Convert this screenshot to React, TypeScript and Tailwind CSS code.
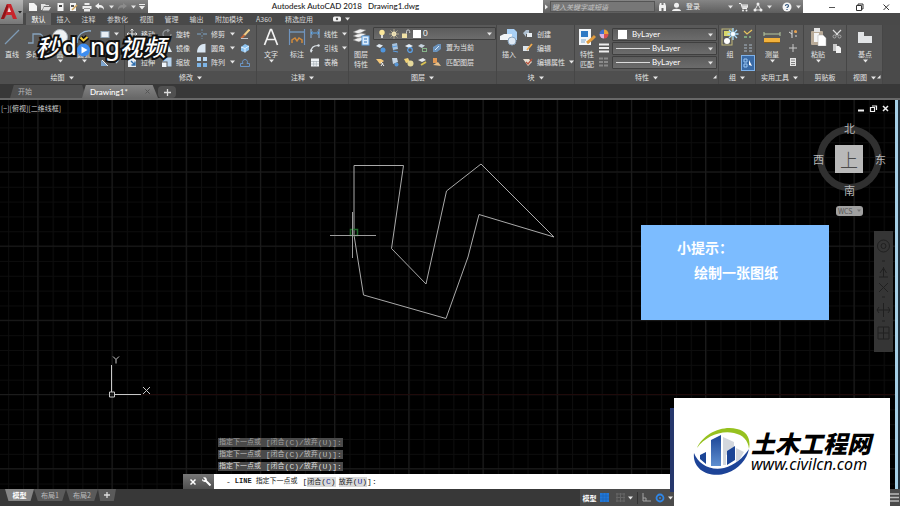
import React from "react";

type Kids = { children?: React.ReactNode };

function Svg({ w, h, children }: Kids & { w: number; h: number }) {
  return (
    <svg width={w} height={h} viewBox={`0 0 ${w} ${h}`} fill="none" aria-hidden="true" className="block shrink-0">
      {children}
    </svg>
  );
}

function Caret() {
  return (
    <Svg w={5} h={4}>
      <path d="M0 .5h5L2.5 3.5z" fill="#e6e6e6" />
    </Svg>
  );
}

/* ---------- small 10px icons ---------- */
const icons: Record<string, React.ReactNode> = {
  rect: <rect x="1" y="2.500" width="8" height="6" fill="#e8eef4" stroke="#8fa3b5" />,
  ellipse: <ellipse cx="5" cy="5" rx="4" ry="2.500" stroke="#dfe6ec" />,
  hatch: <><path d="M1 9V3l7 6z" fill="#7ea6cf" /><path d="M2 3l6 6" stroke="#eee" /></>,
  move: <path d="M5 0v10M0 5h10M3.500 1.500L5 0l1.500 1.500M3.500 8.500L5 10l1.500-1.500M1.500 3.500L0 5l1.500 1.500M8.500 3.500L10 5 8.500 6.500" stroke="#e3e3e3" />,
  rotate: <path d="M6 1.200A4 4 0 1 0 9 5M5 0l2 1.300L5.300 3" stroke="#8f9397" strokeWidth="1.300" />,
  trim: <><path d="M0 5h4M6 5h4" stroke="#7fa6c9" /><path d="M5 0v4M5 6v4" stroke="#6d8ba6" strokeDasharray="2 1" /></>,
  copy: <><circle cx="3.500" cy="4" r="2.800" stroke="#cfd8e0" /><circle cx="7" cy="6.500" r="2.500" fill="#5f9ed6" /></>,
  mirror: <><path d="M4 1v8H0z" fill="#a9c6e2" /><path d="M6 1v8h4z" fill="#e6edf3" /></>,
  fillet: <path d="M0 9.500C0 4 3.500.8 8.500.8v8.700z" fill="#d9e6f2" />,
  stretch: <><path d="M1 0h5l3 3v7H1z" fill="#e8eef4" /><path d="M4 4l4 4M8 4.500V8H4.500" stroke="#2f6fae" strokeWidth="1.400" /></>,
  scale: <><path d="M.5.500h9v9h-4V4.500h-5z" fill="#b7d3ee" /><rect x="0" y="5.500" width="4.500" height="4.500" fill="#eef4fa" /></>,
  array: <><rect width="4" height="4" fill="#b9d7f2" /><rect x="6" width="4" height="4" fill="#b9d7f2" /><rect y="6" width="4" height="4" fill="#7db4e6" /><rect x="6" y="6" width="4" height="4" fill="#7db4e6" /></>,
  erase: <><path d="M9.500.5L4 6.500" stroke="#f0cf88" strokeWidth="2" /><path d="M4.500 6L1 9.500" stroke="#c56a3c" strokeWidth="2" /><path d="M1 9.500h7" stroke="#bfc7cd" /></>,
  explode: <><path d="M1 4l4-3 4 2v4L5 9.500 1 8z" fill="#8cc2ee" /><path d="M1 4l4 1.500L9 3M5 5.500v4" stroke="#e4f2ff" /></>,
  offset: <path d="M.5 9.500h9V6.500H7a2.500 2.500 0 1 0-4 0H.5z" stroke="#6c96c4" />,
  linear: <><path d="M1 0v9M9 0v9" stroke="#8fb6e0" /><path d="M1 4h8M2.500 2.500L1 4l1.500 1.500M7.500 2.500L9 4 7.500 5.500" stroke="#5ea7ea" /></>,
  leader: <><path d="M1 9C1 5 3 2.500 8 2.500" stroke="#dde3e8" strokeWidth="1.200" /><path d="M0 6.500l1 3.500 2-3z" fill="#dde3e8" /><circle cx="8.500" cy="2.500" r="1.200" fill="#dde3e8" /></>,
  table: <><rect x="1" y="1.500" width="8" height="8" fill="#eef2f5" /><path d="M1 4.500h8M1 7h8M3.700 4v6M6.300 4v6" stroke="#9ba4ab" strokeWidth=".6" /></>,
  lay1: <><path d="M0 3l3-2 4 1.500L4 5z" fill="#dfe9f2" /><circle cx="7" cy="7" r="2.500" fill="#4f95dd" /></>,
  lay2: <><path d="M2 1l5-1 1 6-5 1z" fill="#a7c3de" /><path d="M3 8l5 1M2 4l5-1" stroke="#5c9de0" strokeWidth="1.200" /></>,
  lay3: <><path d="M1 3l4-2 4 2-4 2z" fill="#e3edf6" /><circle cx="6" cy="7" r="2.300" stroke="#5aa3ee" strokeWidth="1.200" /></>,
  lay4: <><path d="M0 3l3-2 4 1.500L4 5z" fill="#c7d4df" /><rect x="4.500" y="5.500" width="4" height="3" stroke="#86b489" /></>,
  lay5: <><path d="M1 4l5-3h3v5L5 9H1z" fill="#6b93bd" /><path d="M3 7l4-4" stroke="#d9e9f8" /></>,
  lay6: <><path d="M0 2h5l3 2-4 3z" fill="#f4c879" /><path d="M5 5l3 4M5 9l2-3" stroke="#f3f3f3" /></>,
  lay7: <><path d="M2 1h5l1 4-5 2z" fill="#c4d5e5" /><circle cx="6.500" cy="7.500" r="2" fill="#5796d6" /></>,
  lay8: <><path d="M0 2l4-1 2 4-4 1z" fill="#f1d277" /><circle cx="6.500" cy="6.500" r="3" fill="#e6d99b" /></>,
  lay9: <><path d="M0 3l5-2 3 2-4 2z" fill="#e6e9ec" /><path d="M3 8l5-3" stroke="#d9c252" strokeWidth="2" /></>,
  lay10: <><path d="M1 1h4v5H1z" fill="#e39a55" /><path d="M1 8l8 1-3-4z" fill="#e8c08a" /></>,
  create: <><path d="M0 4l3-3h3v4H3v3z" fill="#aebfd0" /><rect x="4" y="4" width="5" height="4" fill="#e7edf2" /></>,
  edit: <><rect x="0" y="3" width="6" height="5" fill="#dbe4ec" /><path d="M4 7l5-6" stroke="#f0a94c" strokeWidth="1.800" /></>,
  attr: <><path d="M0 2h6l3 3-4 4z" fill="#e6ddd0" /><path d="M3 5l2 2 4-5" stroke="#b5523c" strokeWidth="1.300" /></>,
  wheel: <><path d="M5 5V.5A4.500 4.500 0 0 1 9.500 5z" fill="#e8a23a" /><path d="M5 5h4.500A4.500 4.500 0 0 1 5 9.500z" fill="#d94f4f" /><path d="M5 5v4.500A4.500 4.500 0 0 1 .5 5z" fill="#d9b3e0" /><path d="M5 5H.5A4.500 4.500 0 0 1 5 .5z" fill="#3f6fd0" /></>,
  weight: <path d="M0 1.500h10M0 5h10M0 8.500h10" stroke="#eee" strokeWidth="2" />,
  ltype: <path d="M0 1.500h10M0 5h10M0 8.500h10" stroke="#8a8a8a" strokeWidth="2" strokeDasharray="4 1" />,
  g1: <><path d="M1 2l3 3 5-4" stroke="#e6c25e" strokeWidth="1.300" /><path d="M1 8h3M6 8h2" stroke="#8cc08a" strokeWidth="1.500" /></>,
  g2: <path d="M1 2h3M6 2h3M1 5h3M6 5h3M1 8h3M6 8h3" stroke="#a9b8c6" />,
  g3: <><path d="M1 1h3v3H1zM1 6h3v3H1z" stroke="#9cc8f5" /><path d="M6 2l3 6-3-1z" fill="#fff" /></>,
  u1: <><path d="M1 3l3 2M4 1v8M7 3h2M7 7h2" stroke="#dcdcdc" /><circle cx="7.500" cy="2.500" r="1.500" fill="#e7a04e" /></>,
  u2: <path d="M5 1v8M1 5h8" stroke="#c9c9c9" />,
  u3: <><rect x="2" y="1" width="6" height="8" fill="#e6e6e6" /><path d="M3 3h4M3 5.500h4M3 7.500h4" stroke="#666" strokeWidth=".8" /></>,
  cut: <><path d="M1 1l5 5M9 1L4 6" stroke="#ddd" strokeWidth="1.200" /><circle cx="2.500" cy="7.500" r="1.500" stroke="#aaa" /><circle cx="7.500" cy="7.500" r="1.500" stroke="#aaa" /></>,
  pages: <><path d="M1 1h4v7H1z" fill="#c9c9c9" /><path d="M4 3h3l2 2v5H4z" fill="#f2f2f2" /></>,
  bulb: <><circle cx="5" cy="3.500" r="2.700" fill="#fbe79a" /><path d="M4 6h2v3H4z" fill="#dcdcdc" /></>,
  sun: <><circle cx="5" cy="5" r="2.400" fill="#fdf0c0" /><path d="M5 0v10M0 5h10M1.500 1.500l7 7M8.500 1.500l-7 7" stroke="#d9cfa6" strokeWidth=".6" /></>,
  lock: <><rect x="1" y="4.500" width="5" height="4.500" fill="#f1e2a6" /><path d="M5.500 4.500V2.500a1.600 1.600 0 0 1 3.200 0V4" stroke="#ccc" /></>,
};

function Ic({ n }: { n: string }) {
  return <Svg w={10} h={10}>{icons[n]}</Svg>;
}

/* ---------- large 18px icons ---------- */
const bigIcons: Record<string, React.ReactNode> = {
  line: <path d="M2 16L16 2" stroke="#7e9bb5" strokeWidth="1.300" />,
  pline: <path d="M1 15h5V6h6a4 4 0 0 1 4 4" stroke="#86a3bd" strokeWidth="1.300" />,
  circle: <circle cx="9" cy="9" r="7.500" fill="#eef1f3" stroke="#aab4bd" />,
  arc: <path d="M2 15C2 7 8 2 16 3" stroke="#8fb2d3" strokeWidth="1.300" />,
  text: <path d="M2.500 17L8.500 1.500h1L15.500 17M5 11.500h8" stroke="#f2f2f2" strokeWidth="1.700" />,
  dim: <><path d="M1.500 1v16M16.500 1v16" stroke="#6f93bd" strokeWidth="1.200" /><path d="M2 4h14" stroke="#7fb2e6" /><path d="M4 15v-3l3-2 2 3 2-3 3 2v3" stroke="#d08a3c" strokeWidth="1.500" /></>,
  layers: <><path d="M1 4l7-3 6 1-7 4zM1 8l7-3 6 1-7 4zM1 12l7-3 6 1-7 4z" fill="#f1f1f1" stroke="#777" strokeWidth=".5" /><rect x="10" y="8" width="7" height="9" fill="#dcecfb" stroke="#5ea2e6" /><path d="M12 11h3M12 14h3" stroke="#2d6fb5" /></>,
  insert: <><path d="M7 1h7l3 3v8H7z" fill="#a9d0f5" /><path d="M0 8l4-2h8v6H0z" fill="#f0f3f6" /><circle cx="12" cy="13" r="4" fill="#dfe9f3" stroke="#8ba6c0" /></>,
  match: <><rect x="1" y="1" width="12" height="16" fill="#f4f7fa" /><rect x="3" y="3" width="7" height="6" fill="#2f7ac5" /><path d="M3 12h5M3 14h4" stroke="#7da4c8" /><path d="M9 15l5-4 3-3" stroke="#e09a3c" strokeWidth="3" /></>,
  group: <><rect x="1" y="1" width="10" height="16" stroke="#c2b97a" /><rect x="3" y="3" width="6" height="5" fill="#d9d86a" /><circle cx="6" cy="13" r="3" fill="#fff" /><path d="M12 0v12M6.500 6h11M8 2l8 8M16 2l-8 8" stroke="#a9dcfb" strokeWidth="1.300" /><circle cx="12" cy="6" r="2" fill="#fff" /></>,
  measure: <><path d="M1 6h16M1 4v4M17 4v4" stroke="#b8c9a0" /><rect x="1" y="10" width="16" height="4" fill="#f2b23c" /><path d="M1 14.500h16" stroke="#8d5f13" /></>,
  paste: <><rect x="2" y="3" width="12" height="14" rx="1" fill="#b9ab98" /><rect x="5" y="0" width="6" height="4" fill="#e4e4e4" /><path d="M5 5h5v9H5z" fill="#f4f4f4" /><path d="M9 7h5l3 3v8H9z" fill="#fff" stroke="#aaa" strokeWidth=".5" /></>,
  base: <path d="M2 4h6v4h8v7H2z" fill="#e2e4e6" />,
};

function Big({ n, label, label2, caret, wide }: { n: string; label: string; label2?: string; caret?: boolean; wide?: string }) {
  return (
    <button type="button" className={`flex flex-col items-center shrink-0 pt-[3px] ${wide ?? "w-6"}`}>
      <Svg w={18} h={18}>{bigIcons[n]}</Svg>
      <span className="mt-[3px] h-[10px] leading-[10px] whitespace-nowrap">{label}</span>
      {label2 && <span className="h-[10px] leading-[10px] whitespace-nowrap">{label2}</span>}
      {caret && <Caret />}
    </button>
  );
}

function Small({ n, label, caret }: { n: string; label?: string; caret?: boolean }) {
  return (
    <button type="button" aria-label={label ?? n} className="flex h-[14px] w-full items-center gap-1 whitespace-nowrap">
      <Ic n={n} />
      {label}
      {caret && <span className="ml-auto"><Caret /></span>}
    </button>
  );
}

function Col({ children, w }: Kids & { w: string }) {
  return <div className={`flex shrink-0 flex-col pt-[2px] ${w}`}>{children}</div>;
}

function Panel({ title, w, plain, launcher, children }: Kids & { title: string; w: string; plain?: boolean; launcher?: boolean }) {
  return (
    <section aria-label={title} className={`flex shrink-0 flex-col border-r border-[#464646] ${w}`}>
      <div className="flex h-[46px] bg-[#595959]">{children}</div>
      <div className="relative bg-[#4f4f4f]">
        <h2 className="flex h-[13px] items-center justify-center gap-1 whitespace-nowrap">
          {title}
          {!plain && <Caret />}
        </h2>
        {launcher && (
          <button type="button" aria-label={`${title}设置`} className="absolute top-1 right-px">
            <Svg w={4} h={4}><path d="M3.500 0v3.500H0z" fill="#e6e6e6" /></Svg>
          </button>
        )}
      </div>
    </section>
  );
}

function Combo({ label, value, children }: Kids & { label: string; value: string }) {
  return (
    <div className="flex h-[13px] items-center gap-[2px] rounded-[1px] border border-[#3f3f3f] bg-linear-to-b from-[#5c5c5c] to-[#6c6c6c] px-[3px]">
      {children}
      <select aria-label={label} className="h-[11px] min-w-0 flex-1 appearance-none bg-transparent font-['Lato',sans-serif] text-[8px] leading-[11px] text-white outline-none">
        <option>{value}</option>
      </select>
      <Caret />
    </div>
  );
}

function QuickAccess() {
  return (
    <div className="flex h-full w-[125px] shrink-0 items-center justify-between bg-linear-to-b from-[#858585] to-[#5e5e5e] pr-[3px] pl-[5px]">
      <button type="button" aria-label="新建"><Svg w={10} h={10}><path d="M1 1h5l3 3v5H1z" fill="#f3f3f3" /></Svg></button>
      <button type="button" aria-label="打开"><Svg w={10} h={10}><path d="M0 2h4l1 1h3v1H3L1 8H0zM3 5h7L8 8.500H1.500z" fill="#e2e2e2" /></Svg></button>
      <button type="button" aria-label="保存"><Svg w={10} h={10}><rect x="2.500" y="1" width="6" height="8" fill="#f2f2f2" /><path d="M4 3h3v2H4z" fill="#444" /></Svg></button>
      <button type="button" aria-label="另存为"><Svg w={10} h={10}><rect x="2" y="1" width="6" height="8" fill="#f2f2f2" /><path d="M3 3h3v2H3z" fill="#555" /><path d="M4 8l5-5" stroke="#d5a75a" strokeWidth="1.500" /></Svg></button>
      <button type="button" aria-label="打印"><Svg w={10} h={10}><path d="M2.500 1h5v2h-5zM.5 4h9v3h-9zM2 7h6v2.500H2z" fill="#ececec" /><path d="M2 6.500h6" stroke="#777" strokeWidth=".7" /></Svg></button>
      <button type="button" aria-label="放弃"><Svg w={10} h={10}><path d="M0 4l4-3v2c4 0 5 2 5 5-1-2-2-2.500-5-2.500V7z" fill="#f1f1f1" /></Svg></button>
      <Caret />
      <button type="button" aria-label="重做"><Svg w={10} h={10}><path d="M10 4L6 1v2C2 3 1 5 1 8c1-2 2-2.500 5-2.500V7z" fill="#8c8c8c" /></Svg></button>
      <Caret />
      <button type="button" aria-label="自定义快速访问工具栏"><Svg w={6} h={6}><path d="M0 .5h6" stroke="#eee" /><path d="M0 2h6L3 5.500z" fill="#eee" /></Svg></button>
    </div>
  );
}

function TitleBar() {
  return (
    <div className="flex h-[13px] items-stretch bg-white">
      <QuickAccess />
      <h1 className="flex-1 text-center font-['Lato',sans-serif] text-[8px] leading-[13px] font-medium whitespace-pre text-[#222]">
        {"Autodesk AutoCAD 2018   Drawing1.dwg"}
      </h1>
      <div className="flex w-[260px] shrink-0 items-center bg-linear-to-b from-[#858585] to-[#5e5e5e] text-[7px] text-[#eee]">
        <Svg w={7} h={8}><path d="M2 1.500v5L5 4z" fill="#eee" /></Svg>
        <input
          aria-label="搜索"
          placeholder="键入关键字或短语"
          className="h-[11px] w-[105px] border border-[#555] bg-[#777] px-px text-[7px] italic outline-none placeholder:text-[#c4c4c4]"
        />
        <button type="button" aria-label="搜索" className="ml-[3px]">
          <Svg w={9} h={10}><path d="M1 9V4l1-3h1.500v2h2V1H7l1 3v5H5.500V6h-2v3z" fill="#f0f0f0" /></Svg>
        </button>
        <button type="button" className="ml-[5px] flex items-center gap-[5px]">
          <Svg w={9} h={10}><circle cx="4.500" cy="3.200" r="2.500" fill="#f0f0f0" /><path d="M0 9c0-3 9-3 9 0z" fill="#f0f0f0" /></Svg>
          登录
        </button>
        <span className="mr-[6px] ml-auto"><Caret /></span>
        <button type="button" aria-label="购物车"><Svg w={9} h={10}><path d="M0 1.500h2l1.500 5H8M2 3h7L8 6" stroke="#f0f0f0" /><path d="M2.500 3.500h6L8 6H3.500z" fill="#ddd" /><circle cx="4" cy="8.500" r="1" fill="#eee" /><circle cx="7.500" cy="8.500" r="1" fill="#eee" /></Svg></button>
        <button type="button" aria-label="保持连接" className="ml-[5px] flex items-center gap-1"><Svg w={10} h={10}><path d="M5 2L2 8h6z" stroke="#dcdcdc" /><circle cx="5" cy="2" r="1.500" fill="#eee" /><circle cx="2" cy="8" r="1.500" fill="#eee" /><circle cx="8" cy="8" r="1.500" fill="#eee" /></Svg><Caret /></button>
        <button type="button" aria-label="帮助" className="mr-[2px] ml-[10px] flex items-center gap-1"><Svg w={10} h={10}><circle cx="5" cy="5" r="4.500" fill="#f5f5f5" /><path d="M3.500 4c0-2 3-2 3 0 0 1-1.500 1-1.500 2M5 7v1" stroke="#2f557d" strokeWidth="1.200" /></Svg><Caret /></button>
      </div>
      <div className="flex w-[97px] shrink-0 items-center justify-end gap-[17px] pr-[9px]">
        <button type="button" aria-label="最小化"><Svg w={10} h={10}><path d="M2 5.500h6" stroke="#555" /></Svg></button>
        <button type="button" aria-label="还原"><Svg w={10} h={10}><path d="M2.500 3.500h5v5h-5zM4 3.500V2h5v5H7.500" stroke="#333" /></Svg></button>
        <button type="button" aria-label="关闭"><Svg w={10} h={10}><path d="M2.500 2.500l5.500 5.500M8 2.500L2.500 8" stroke="#333" /></Svg></button>
      </div>
    </div>
  );
}

function RibbonTabs() {
  const tab = "h-full text-center leading-[12px] shrink-0";
  return (
    <nav aria-label="功能区" className="flex h-[12px] items-center bg-[#494949] pl-[3px] text-[7px] text-[#d8d8d8]">
      <button type="button" className={`${tab} w-[25px] bg-[#656565] text-white`}>默认</button>
      <button type="button" className={`${tab} w-[25px]`}>插入</button>
      <button type="button" className={`${tab} w-[25px]`}>注释</button>
      <button type="button" className={`${tab} w-[33px]`}>参数化</button>
      <button type="button" className={`${tab} w-[25px]`}>视图</button>
      <button type="button" className={`${tab} w-[25px]`}>管理</button>
      <button type="button" className={`${tab} w-[25px]`}>输出</button>
      <button type="button" className={`${tab} w-10`}>附加模块</button>
      <button type="button" className={`${tab} w-[30px]`}>A360</button>
      <button type="button" className={`${tab} w-10`}>精选应用</button>
      <button type="button" aria-label="最小化功能区" className="ml-[14px] flex items-center gap-1">
        <Svg w={8} h={6}><rect y=".5" width="8" height="5" rx="1.500" fill="#f1f1f1" /><circle cx="4" cy="3" r="1.200" fill="#555" /></Svg>
        <Caret />
      </button>
    </nav>
  );
}

function Ribbon() {
  return (
    <div className="flex h-[59px] overflow-hidden bg-[#4a4a4a] text-[7px] text-[#e4e4e4]">
      <Panel title="绘图" w="w-[125px]">
        <Big n="line" label="直线" />
        <Big n="pline" label="多段线" />
        <Big n="circle" label="圆" caret />
        <Big n="arc" label="圆弧" caret />
        <Col w="w-[19px] ml-1">
          <Small n="rect" caret />
          <Small n="ellipse" caret />
          <Small n="hatch" caret />
        </Col>
      </Panel>
      <Panel title="修改" w="w-[132px]">
        <Col w="w-[35px] pl-[2px]">
          <Small n="move" label="移动" />
          <Small n="copy" label="复制" />
          <Small n="stretch" label="拉伸" />
        </Col>
        <Col w="w-[35px] pl-[2px]">
          <Small n="rotate" label="旋转" />
          <Small n="mirror" label="镜像" />
          <Small n="scale" label="缩放" />
        </Col>
        <Col w="w-10 pl-[2px]">
          <Small n="trim" label="修剪" caret />
          <Small n="fillet" label="圆角" caret />
          <Small n="array" label="阵列" caret />
        </Col>
        <Col w="w-4 pl-[5px]">
          <Small n="erase" />
          <Small n="explode" />
          <Small n="offset" />
        </Col>
      </Panel>
      <Panel title="注释" w="w-[92px]">
        <Big n="text" label="文字" caret wide="w-7" />
        <Big n="dim" label="标注" />
        <Col w="w-9 pl-px">
          <Small n="linear" label="线性" caret />
          <Small n="leader" label="引线" caret />
          <Small n="table" label="表格" />
        </Col>
      </Panel>
      <Panel title="图层" w="w-[148px]">
        <Big n="layers" label="图层" label2="特性" />
        <div className="flex min-w-0 flex-1 flex-col pt-[2px]">
          <Combo label="图层" value="0">
            <Ic n="bulb" /><Ic n="sun" /><Ic n="lock" />
            <span className="h-2 w-2 bg-white" />
          </Combo>
          <div className="flex h-[15px] items-center gap-1 pl-[3px] whitespace-nowrap">
            <Ic n="lay1" /><Ic n="lay2" /><Ic n="lay3" /><Ic n="lay4" /><Ic n="lay5" />
            <button type="button">置为当前</button>
          </div>
          <div className="flex h-[14px] items-center gap-1 pl-[3px] whitespace-nowrap">
            <Ic n="lay6" /><Ic n="lay7" /><Ic n="lay8" /><Ic n="lay9" /><Ic n="lay10" />
            <button type="button">匹配图层</button>
          </div>
        </div>
      </Panel>
      <Panel title="块" w="w-[78px]">
        <Big n="insert" label="插入" />
        <Col w="w-[52px] pl-[2px]">
          <Small n="create" label="创建" />
          <Small n="edit" label="编辑" />
          <Small n="attr" label="编辑属性" caret />
        </Col>
      </Panel>
      <Panel title="特性" w="w-[144px]" launcher>
        <Big n="match" label="特性" label2="匹配" />
        <Col w="w-[13px]">
          <Small n="wheel" />
          <Small n="weight" />
          <Small n="ltype" />
        </Col>
        <div className="flex flex-1 flex-col gap-px pt-[3px] pr-px">
          <Combo label="对象颜色" value="ByLayer"><span className="mr-[3px] ml-[2px] h-[9px] w-[9px] bg-white" /></Combo>
          <Combo label="线宽" value="ByLayer"><span className="h-px w-[34px] shrink-0 bg-[#ddd]" /></Combo>
          <Combo label="线型" value="ByLayer"><span className="h-px w-[34px] shrink-0 bg-[#ddd]" /></Combo>
        </div>
      </Panel>
      <Panel title="组" w="w-[37px]">
        <Big n="group" label="组" wide="w-[22px]" />
        <Col w="w-[14px]">
          <div className="pl-[2px]"><Small n="g1" /></div>
          <div className="pl-[2px]"><Small n="g2" /></div>
          <div className="border border-[#7fb2ea] bg-[#3a6aa5] pl-px"><Small n="g3" /></div>
        </Col>
      </Panel>
      <Panel title="实用工具" w="w-12">
        <Big n="measure" label="测量" caret wide="w-8" />
        <Col w="w-3"><Small n="u1" /><Small n="u2" /><Small n="u3" /></Col>
      </Panel>
      <Panel title="剪贴板" w="w-[43px]" plain>
        <Big n="paste" label="粘贴" caret wide="w-7" />
        <Col w="w-3"><Small n="cut" /><Small n="pages" /></Col>
      </Panel>
      <Panel title="视图" w="w-9" launcher>
        <Big n="base" label="基点" caret wide="w-9" />
      </Panel>
    </div>
  );
}

function FileTabs() {
  return (
    <div className="flex h-4 items-end border-b-2 border-[#686868] bg-[#383838] pl-[10px] text-[7px]">
      <button type="button" className="h-[13px] w-[76px] bg-[#505050] pl-2 text-left text-[#b8b8b8] [clip-path:polygon(5%_0,95%_0,100%_100%,0_100%)]">开始</button>
      <button type="button" className="-ml-1 flex h-[13px] w-[76px] items-center justify-between bg-linear-to-b from-[#858585] to-[#686868] px-2 font-['Lato',sans-serif] text-[8px] font-medium text-white [clip-path:polygon(5%_0,93%_0,100%_100%,0_100%)]">
        Drawing1*
        <Svg w={5} h={5}><path d="M.5.500l4 4M4.500.500l-4 4" stroke="#555" /></Svg>
      </button>
      <button type="button" aria-label="新图形" className="flex h-[12px] w-[18px] items-center justify-center rounded-[4px] bg-[#505050]">
        <Svg w={7} h={7}><path d="M3.500 0v7M0 3.500h7" stroke="#ddd" strokeWidth="1.300" /></Svg>
      </button>
    </div>
  );
}

/* Model space: grid, the polyline being drawn, crosshair and UCS marker */
function Drawing() {
  return (
    <svg className="absolute inset-0 h-full w-full" aria-label="Drawing1">
      <defs>
        <pattern id="minor" width="14.840" height="14.840" x="112" y="294.500" patternUnits="userSpaceOnUse">
          <path d="M.5 0v15M0 .5h15" stroke="#0d0d0d" />
        </pattern>
        <pattern id="major" width="74.200" height="74.200" x="111.500" y="294" patternUnits="userSpaceOnUse">
          <path d="M.5 0v75M0 .5h75" stroke="#1c1c1c" />
        </pattern>
      </defs>
      <rect width="100%" height="100%" fill="url(#minor)" />
      <rect width="100%" height="100%" fill="url(#major)" />
      <path d="M141 294.500h753" stroke="#1f0a0a" />
      <path
        d="M354 65.500h49.500L391.500 148.500 426 184l20.500-93L481 64l73 73-75-22.500L468 157l-22 61.500L363.500 195 354 135z"
        fill="none"
        stroke="#a9a9a9"
      />
      <path d="M350.500 129.500h7v6h-7z" fill="none" stroke="#1f6b2a" strokeWidth="1.500" />
      <path d="M330 135.500h46M352.500 112v46" stroke="#9c9c9c" />
      <path d="M111.500 265v27M114 294.500h27M109.500 292h5v5h-5z" fill="none" stroke="#c8c8c8" />
      <path d="M113 256.500l3 3 3-3M116 259.500v4M143 287l7 7M150 287l-7 7" fill="none" stroke="#c8c8c8" />
    </svg>
  );
}

function ViewCube() {
  return (
    <div className="absolute top-[22px] right-[10px] w-[76px] text-[11px] leading-[12px] text-[#b8b8b8]">
      <div className="relative h-[74px]">
        <div className="absolute top-[4px] left-[5px] h-[65px] w-[65px] rounded-full border-[7px] border-[#303030]" />
        <button type="button" className="absolute top-[23px] left-[23px] h-7 w-7 bg-[#b9b9b9] text-[18px] leading-6 font-light text-[#4a4a4a]">上</button>
        <span className="absolute top-0 left-8">北</span>
        <span className="absolute top-[31px] left-px">西</span>
        <span className="absolute top-[31px] right-[2px]">东</span>
        <span className="absolute top-[62px] left-8">南</span>
      </div>
      <button type="button" className="mt-[10px] ml-6 flex h-[10px] w-[27px] items-center justify-between rounded-[3px] bg-[#a0a0a0] px-[2px] text-[7px] text-[#555]">
        WCS
        <Svg w={5} h={4}><path d="M1 .5h4L3 3z" fill="#777" /></Svg>
      </button>
    </div>
  );
}

function NavBar() {
  return (
    <div aria-label="导航栏" className="absolute top-[131px] right-[5px] flex w-[19px] flex-col items-center bg-[#353535] py-[6px]">
      <svg width="15" height="109" viewBox="0 0 15 109" fill="none" stroke="#202020" aria-hidden="true">
        <circle cx="7.500" cy="9" r="6" /><circle cx="7.500" cy="9" r="2.500" />
        <path d="M6 24h3M7.500 30v10M4 36l3.500-5 3 5M3 40h9M3 46l9 9M12 46l-9 9M6 60h3M7.500 66v14M1 73h13M3 70l-2 3 2 3M12 70l2 3-2 3M6 84h3M2 90h11v12H2zM2 96h11M7.500 90v12" />
      </svg>
    </div>
  );
}

function HistoryLine({ tone }: { tone: string }) {
  return (
    <p className={`flex h-[9px] w-fit items-center bg-[#4a4a4a] px-px font-['Liberation_Mono','Noto_Sans_CJK_SC',monospace] text-[8px] leading-[9px] whitespace-pre ${tone}`}>
      <span className="text-[7px]">指定下一点或</span>
      <span> [</span>
      <span className="text-[7px]">闭合</span>
      <span>(C)/</span>
      <span className="text-[7px]">放弃</span>
      <span>(U)]:</span>
    </p>
  );
}

function CommandLine() {
  return (
    <div className="absolute right-[10px] bottom-0 left-[183px]">
      <div className="mb-[3px] ml-[35px] flex flex-col gap-[3px]">
        <HistoryLine tone="text-[#a0a0a0]" />
        <HistoryLine tone="text-[#bdbdbd]" />
        <HistoryLine tone="text-[#dedede]" />
      </div>
      <div className="flex h-[15px] items-center bg-white font-['Liberation_Mono','Noto_Sans_CJK_SC',monospace] text-[8px] text-[#222]">
        <div className="flex h-full w-[31px] items-center justify-end gap-[6px] bg-linear-to-b from-[#777] to-[#4e4e4e] pr-[3px]">
          <button type="button" aria-label="关闭"><Svg w={6} h={6}><path d="M.5.500l5 5M5.500.500l-5 5" stroke="#fff" strokeWidth="1.500" /></Svg></button>
          <button type="button" aria-label="自定义"><Svg w={9} h={9}><path d="M3 3l5.500 5.500" stroke="#fff" strokeWidth="2" /><path d="M1 .5l2 2-1 1-2-1.500A2.600 2.600 0 0 0 4.500 4 2.600 2.600 0 0 0 3 .3z" fill="#fff" /></Svg></button>
        </div>
        <label htmlFor="command" className="flex items-center pl-3 whitespace-pre">
          <span>-</span>
          <b className="ml-1 text-[7px]">LINE</b>
          <span className="ml-1 text-[7px]">指定下一点或</span>
          <span> [</span>
        </label>
        <button type="button" className="flex bg-[#d9d9d9] leading-[10px]"><span className="text-[7px]">闭合</span>(<span className="text-[#2330a0]">C</span>)</button>
        <button type="button" className="ml-[3px] flex bg-[#d9d9d9] leading-[10px]"><span className="text-[7px]">放弃</span>(<span className="text-[#2330a0]">U</span>)</button>
        <span>]:</span>
        <input id="command" className="min-w-0 flex-1 bg-transparent outline-none" />
      </div>
    </div>
  );
}

function Canvas() {
  return (
    <main className="relative min-h-0 flex-1 border-r-[2px] border-[#20303c] bg-black">
      <Drawing />
      <p className="absolute top-[3px] left-px text-[7px] leading-[10px] text-[#d0d0d0]">[−][俯视][二维线框]</p>
      <div className="absolute top-1 right-[8px] flex gap-[3px]">
        <button type="button" aria-label="最小化视口"><Svg w={9} h={9}><path d="M1 6.500h6" stroke="#eee" strokeWidth="2" /></Svg></button>
        <button type="button" aria-label="还原视口"><Svg w={9} h={9}><path d="M1.500 3.500h4v4h-4zM3 2h4.500v4" stroke="#eee" strokeWidth="1.200" /></Svg></button>
        <button type="button" aria-label="关闭视口"><Svg w={9} h={9}><path d="M2 2l5 5M7 2L2 7" stroke="#eee" strokeWidth="1.500" /></Svg></button>
      </div>
      <ViewCube />
      <NavBar />
      <aside className="absolute top-[125px] right-[69px] h-[95px] w-[188px] bg-[#7cbcff] pt-[10px] pl-9 text-[14px] leading-[25px] font-bold text-white">
        <p>小提示：</p>
        <p className="pl-[17px]">绘制一张图纸</p>
      </aside>
      <CommandLine />
      <div className="absolute inset-y-0 right-0 w-[3px] bg-[#a5cfe6]" />
    </main>
  );
}

function StatusBar() {
  const tab = "h-[12px] [clip-path:polygon(0_0,100%_0,88%_100%,12%_100%)]";
  return (
    <footer className="flex h-[17px] shrink-0 items-start bg-[#383838] text-[7px] leading-[12px] text-[#bdbdbd]">
      <div className="flex pl-[5px]">
        <button type="button" className={`${tab} w-[29px] bg-[#858585] font-bold text-white`}>模型</button>
        <button type="button" className={`${tab} w-8 bg-[#5a5a5a]`}>布局1</button>
        <button type="button" className={`${tab} w-8 bg-[#5a5a5a]`}>布局2</button>
        <button type="button" aria-label="新建布局" className={`${tab} flex w-[18px] items-center justify-center bg-[#5a5a5a]`}>
          <Svg w={6} h={6}><path d="M3 0v6M0 3h6" stroke="#ddd" strokeWidth="1.300" /></Svg>
        </button>
      </div>
      <div className="ml-auto flex h-full w-[320px] items-center bg-[#4b4b4b] pl-[2px] text-white">
        <button type="button" className="w-[15px] font-bold">模型</button>
        <button type="button" aria-label="栅格" className="ml-[3px]"><Svg w={9} h={9}><rect width="9" height="9" fill="#2277d6" /><path d="M3 0v9M6 0v9M0 3h9M0 6h9" stroke="#1b5fae" strokeWidth=".6" /></Svg></button>
        <button type="button" aria-label="捕捉" className="ml-[7px]"><Svg w={9} h={9}><path d="M0 1h9M0 4.500h9M0 8h9M1 0v9M4.500 0v9M8 0v9" stroke="#666" /></Svg></button>
        <span className="ml-[3px]"><Caret /></span>
        <span className="mx-1 h-3 w-px bg-[#333]" />
        <button type="button" aria-label="正交"><Svg w={9} h={9}><path d="M1 0v8h8M1 5h3v3" stroke="#a5a5a5" /></Svg></button>
        <button type="button" aria-label="极轴追踪" className="ml-1"><Svg w={10} h={10}><circle cx="5" cy="5" r="3.500" stroke="#2f86e6" strokeWidth="1.800" /><circle cx="5" cy="5" r="1" fill="#2f86e6" /></Svg></button>
        <span className="ml-[3px]"><Caret /></span>
        <button type="button" aria-label="自定义" className="mr-px ml-auto"><Svg w={9} h={9}><path d="M0 1h9M0 4.500h9M0 8h9" stroke="#bbb" strokeWidth="1.500" /></Svg></button>
      </div>
    </footer>
  );
}

function SiteBadge() {
  return (
    <div className="absolute right-[10px] bottom-0 flex">
      <div className="mt-[10px] mb-[14px] w-1 bg-[#26376c]" />
      <div className="flex h-[108px] w-[216px] items-center bg-white pl-[19px]">
        <svg width="58" height="48" viewBox="0 0 58 48" fill="none" aria-hidden="true">
          <defs>
            <linearGradient id="tower" x1="0" y1="0" x2="0" y2="1">
              <stop offset="0" stopColor="#1c4596" /><stop offset="1" stopColor="#5f8fd0" />
            </linearGradient>
          </defs>
          <path d="M30 9l11 5v9l-8 4v10h-3zM43 20l8 4-4 7-4 3z" fill="#d3d7dd" />
          <path d="M18 12l10-5v31H18z" fill="url(#tower)" />
          <path d="M34 23l8-5v14l-8 5zM7 27l6-3v12l-6-5z" fill="#1c4596" />
          <path d="M4 20C10 6 29-3 44 1c10 2 14 10 12 20-1-9-6-14-15-16C27 2 12 9 4 20z" fill="#96c11f" />
          <path d="M1 25c-2 17 16 26 33 20 12-4 20-14 22-24-6 9-14 16-25 19C17 43 5 36 1 25z" fill="#1d4397" />
        </svg>
        <div className="text-black italic">
          <p className="text-[24px] leading-6 font-black whitespace-nowrap">土木工程网</p>
          <p className="font-['Noto_Sans',sans-serif] text-[16px] leading-[18px]">www.civilcn.com</p>
        </div>
      </div>
    </div>
  );
}

function Watermark() {
  return (
    <div className="pointer-events-none absolute top-[31px] left-[36px] flex items-center text-[23px] leading-[30px] font-medium whitespace-nowrap text-white [-webkit-text-stroke:4px_#111] [paint-order:stroke_fill]">
      <span className="italic">秒</span>
      <span className="ml-[3px] font-['Noto_Sans',sans-serif] text-[24px]">d</span>
      <svg width="13" height="24" viewBox="0 0 13 24" fill="none" className="relative z-10 block shrink-0" aria-hidden="true">
        <path d="M3.500 3.500l3 3 4-3.500" stroke="#111" strokeWidth="5" />
        <path d="M3.500 3.500l3 3 4-3.500" stroke="#f6cf35" strokeWidth="2" />
        <circle cx="6.500" cy="16" r="6.500" fill="#3d8df0" />
        <path d="M4.500 12.500v7l6-3.500z" fill="#fff" />
      </svg>
      <span className="font-['Noto_Sans',sans-serif] text-[24px]">ng</span>
      <span className="italic">视频</span>
    </div>
  );
}

export default function App() {
  return (
    <div className="relative flex h-screen flex-col overflow-hidden bg-[#383838] font-['Noto_Sans_CJK_SC',sans-serif]">
      <header className="shrink-0">
        <div className="flex bg-[#494949]">
          <button type="button" aria-label="应用程序菜单" className="flex h-6 w-[23px] shrink-0 items-center gap-px bg-linear-to-b from-[#b5b5b5] to-[#777] pl-px">
            <Svg w={16} h={18}><path d="M0 16L6 1h4l6 15h-4l-1.500-4h-5L3 16z" fill="#c8242b" /><path d="M6.500 9L8 4l2 5z" fill="#f0d7d7" /><path d="M0 16L6 1l1 3-4 12z" fill="#8e1519" /></Svg>
            <Svg w={4} h={4}><path d="M0 1h4L2 3.500z" fill="#222" /></Svg>
          </button>
          <div className="min-w-0 flex-1">
            <TitleBar />
            <RibbonTabs />
          </div>
        </div>
        <Ribbon />
        <FileTabs />
      </header>
      <Canvas />
      <StatusBar />
      <Watermark />
      <SiteBadge />
    </div>
  );
}
